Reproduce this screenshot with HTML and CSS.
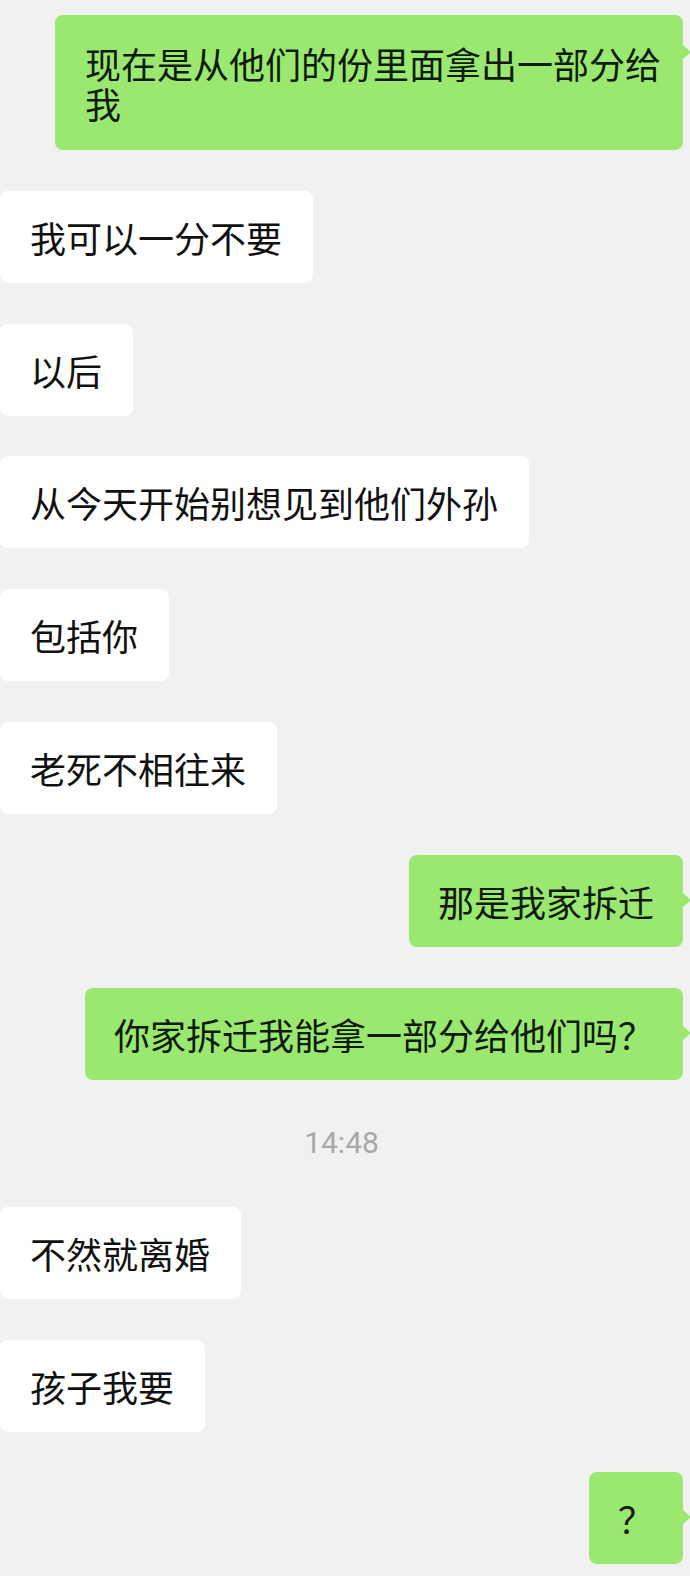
FILE: index.html
```html
<!DOCTYPE html>
<html lang="zh-CN">
<head>
  <meta charset="UTF-8">
  <meta name="viewport" content="width=device-width, initial-scale=1.0">
  <title>聊天记录</title>
  <link rel="stylesheet" href="styles.css">
</head>
<body>
  <div class="chat">
    <div class="row mine">
      <div class="bubble long">现在是从他们的份里面拿出一部分给我</div>
    </div>
    <div class="row">
      <div class="bubble">我可以一分不要</div>
    </div>
    <div class="row">
      <div class="bubble">以后</div>
    </div>
    <div class="row">
      <div class="bubble">从今天开始别想见到他们外孙</div>
    </div>
    <div class="row">
      <div class="bubble">包括你</div>
    </div>
    <div class="row">
      <div class="bubble">老死不相往来</div>
    </div>
    <div class="row mine">
      <div class="bubble">那是我家拆迁</div>
    </div>
    <div class="row mine">
      <div class="bubble">你家拆迁我能拿一部分给他们吗？</div>
    </div>

    <div class="time">14:48</div>

    <div class="row">
      <div class="bubble">不然就离婚</div>
    </div>
    <div class="row">
      <div class="bubble">孩子我要</div>
    </div>
    <div class="row mine">
      <div class="bubble">？</div>
    </div>
  </div>
</body>
</html>
```

FILE: styles.css
```css
body {
  margin: 0;
  background-color: #f1f1f1;
  font-family: "Noto Sans CJK SC", "Noto Sans", sans-serif;
  overflow: hidden;
}

.chat {
  display: flex;
  flex-direction: column;
  gap: 40.8px;
  padding: 15px 7px 0 0;
}

.row {
  display: flex;
}

.row.mine {
  justify-content: flex-end;
}

.bubble {
  position: relative;
  box-sizing: border-box;
  max-width: 628px;
  padding: 26px 31px 26px 30px;
  font-size: 36px;
  line-height: 40px;
  color: #111111;
  background: #ffffff;
  border-radius: 8px;
}

.mine .bubble {
  padding: 26px 29px;
  background: #9ae870;
  color: #0e1a0a;
}

/* little tail on the right of my own messages */
.mine .bubble::after {
  content: "";
  position: absolute;
  left: 100%;
  top: 38px;
  border-left: 8px solid #9ae870;
  border-top: 7px solid transparent;
  border-bottom: 7px solid transparent;
}

.mine .bubble.long {
  padding: 27.5px 21px 27.5px 30px;
}

.bubble.long::after {
  top: 30px;
}

.time {
  text-align: center;
  font-family: Roboto, "Noto Sans", sans-serif;
  font-size: 30px;
  line-height: 45.6px;
  color: #a8a8a8;
}
```
